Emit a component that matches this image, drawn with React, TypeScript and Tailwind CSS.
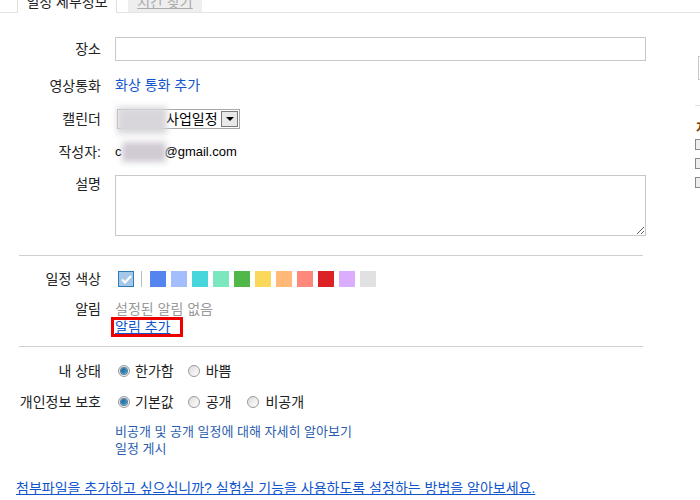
import React from "react"

const swatches = [
  "#5484ed", "#a4bdfc", "#46d6db", "#7ae7bf", "#51b749", "#fbd75b",
  "#ffb878", "#ff887c", "#dc2127", "#dbadff", "#e1e1e1",
]

const Radio: React.FC<{ checked?: boolean }> = ({ checked }) => (
  <span className="w-[12px] h-[12px] rounded-full border border-[#9a9a9a] bg-gradient-to-br from-[#dcdcdc] to-[#ffffff] flex items-center justify-center shrink-0">
    {checked && <span className="w-[6px] h-[6px] rounded-full bg-gradient-to-br from-[#1c5e8c] to-[#3aa0d8] shadow-[0_0_0_1px_#5f7f99]" />}
  </span>
)

const Row: React.FC<{ label: string; className?: string; align?: string; children: React.ReactNode }> = ({
  label,
  className = "",
  align = "items-center",
  children,
}) => (
  <div className={`flex ${align} ${className}`}>
    <div className="w-[101px] shrink-0 text-right leading-[18px] text-[#222]">{label}</div>
    <div className="ml-[14px] flex-1 min-w-0">{children}</div>
  </div>
)

export default function App() {
  return (
    <div className="w-[700px] h-[500px] overflow-hidden bg-white text-[14px] text-[#222] font-['Liberation_Sans','Noto_Sans_CJK_KR',sans-serif]">
      {/* Tabs */}
      <div className="flex h-[13px] border-b border-[#e5e5e5] pl-[17px] gap-[11px]">
        <div className="h-[13px] w-[100px] bg-white border-x border-[#e0e0e0] overflow-hidden text-center">
          <span className="relative -top-[8px] leading-[13px] text-[#222]">일정 세부정보</span>
        </div>
        <div className="h-[12px] w-[74px] bg-[#eeeeee] overflow-hidden text-center">
          <span className="relative -top-[8px] leading-[13px] underline text-[#aaa]">시간 찾기</span>
        </div>
      </div>

      <div className="flex">
        {/* Main form */}
        <div className="w-[695px] shrink-0">
          <Row label="장소" className="mt-[24px]">
            <div className="w-[531px] h-[24px] border border-[#c8c8c8]" />
          </Row>

          <Row label="영상통화" className="mt-[14px]">
            <a className="text-[#1155cc] leading-[18px]">화상 통화 추가</a>
          </Row>

          <Row label="캘린더" className="mt-[13px]">
            <div className="relative w-[123px] h-[20px] ml-[2px] border border-[#a8a8a8] flex items-center">
              <div className="absolute -left-px -top-[3px] w-[50px] h-[27px] bg-[#d8d6da] blur-[3px]" />
              <span className="ml-[48px] leading-[18px] text-black">사업일정</span>
              <span className="ml-auto mr-[1px] w-[17px] h-[16px] border border-[#7a7a7a] bg-[#e8e8e8] flex items-center justify-center">
                <span className="w-0 h-0 border-x-[4px] border-x-transparent border-t-[4px] border-t-black" />
              </span>
            </div>
          </Row>

          <Row label="작성자:" className="mt-[14px]">
            <div className="relative flex items-center leading-[18px] text-[13px]">
              <span className="text-black">c</span>
              <span className="absolute left-[7px] -top-[1px] w-[44px] h-[20px] bg-[#cfcad3] blur-[3px]" />
              <span className="ml-[43px] text-black">@gmail.com</span>
            </div>
          </Row>

          <Row label="설명" className="mt-[14px]" align="items-start">
            <textarea className="block w-[531px] h-[61px] border border-[#c8c8c8] outline-none resize-y" />
          </Row>

          <div className="mt-[19px] ml-[19px] w-[624px] border-t border-[#d0d0d0]" />

          <Row label="일정 색상" className="mt-[14px]">
            <div className="flex items-center h-[17px]">
              <span className="ml-[3px] w-[16px] h-[16px] border border-[#2b7bb9] bg-[#a6c8e8] flex items-center justify-center">
                <svg width="11" height="9" viewBox="0 0 11 9" fill="none">
                  <path d="M1 4.5 L4 7.5 L10 1" stroke="white" strokeWidth="2" />
                </svg>
              </span>
              <span className="ml-[7px] w-px h-[16px] bg-[#bbb]" />
              <div className="ml-[8px] flex gap-[5px]">
                {swatches.map(c => (
                  <span key={c} className="w-[16px] h-[16px]" style={{ backgroundColor: c }} />
                ))}
              </div>
            </div>
          </Row>

          <Row label="알림" className="mt-[12px]" align="items-start">
            <div className="leading-[18px] text-[#999]">설정된 알림 없음</div>
            <div className="-ml-[4px] -mt-[1px] w-[72px] h-[20px] border-[3px] border-[#ee0000] flex items-center pl-[1px]">
              <a className="text-[#1155cc] underline leading-[14px]">알림 추가</a>
            </div>
          </Row>

          <div className="mt-[9px] ml-[19px] w-[624px] border-t border-[#d0d0d0]" />

          <Row label="내 상태" className="mt-[15px]">
            <div className="flex items-center leading-[18px] ml-[3px]">
              <Radio checked />
              <span className="ml-[5px]">한가함</span>
              <span className="ml-[14px]"><Radio /></span>
              <span className="ml-[6px]">바쁨</span>
            </div>
          </Row>

          <Row label="개인정보 보호" className="mt-[13px]">
            <div className="flex items-center leading-[18px] ml-[3px]">
              <Radio checked />
              <span className="ml-[5px]">기본값</span>
              <span className="ml-[14px]"><Radio /></span>
              <span className="ml-[6px]">공개</span>
              <span className="ml-[16px]"><Radio /></span>
              <span className="ml-[6px]">비공개</span>
            </div>
          </Row>

          <div className="mt-[12px] ml-[115px] text-[13px] leading-[17px] text-[#2a5db0]">
            <div>비공개 및 공개 일정에 대해 자세히 알아보기</div>
            <div>일정 게시</div>
          </div>

          <a className="block mt-[22px] ml-[16px] text-[#1155cc] underline leading-[18px]">
            첨부파일을 추가하고 싶으십니까? 실험실 기능을 사용하도록 설정하는 방법을 알아보세요.
          </a>
        </div>

        {/* Sidebar, mostly cut off */}
        <div className="flex-1 overflow-hidden">
          <div className="mt-[43px] ml-[3px] w-[20px] h-[24px] border border-[#c8c8c8]" />
          <div className="mt-[25px] w-[20px] border-t border-[#e0e0e0]" />
          <div className="mt-[14px] ml-[1px] text-[13px] font-bold leading-[16px] text-[#7a3b00]">지</div>
          <div className="mt-[3px] flex flex-col gap-[8px]">
            {[0, 1, 2].map(i => (
              <span key={i} className="w-[11px] h-[11px] border border-[#888] bg-[#eee]" />
            ))}
          </div>
        </div>
      </div>
    </div>
  )
}
